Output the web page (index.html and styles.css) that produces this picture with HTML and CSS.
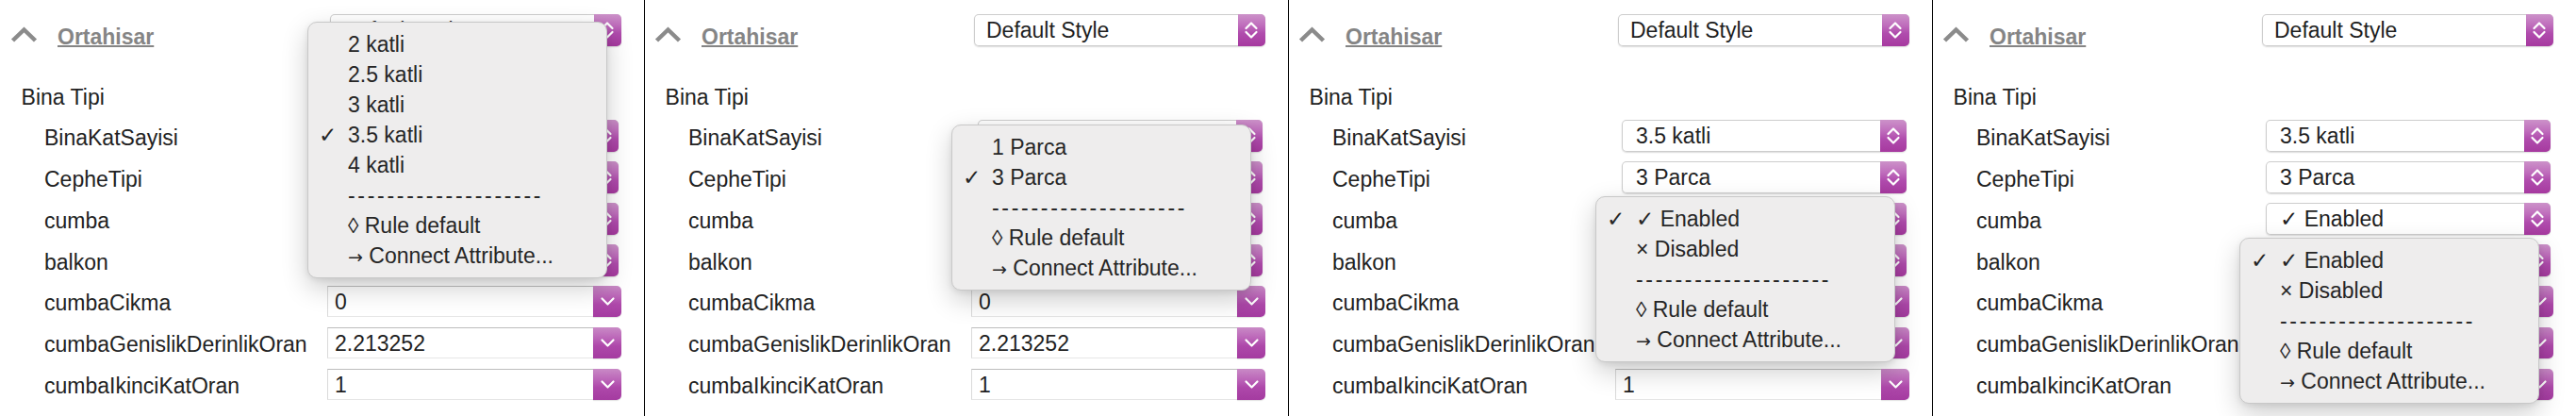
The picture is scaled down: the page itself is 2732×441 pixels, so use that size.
FILE: index.html
```html
<!DOCTYPE html>
<html lang="tr">
<head>
<meta charset="utf-8">
<title>Ortahisar attributes</title>
<link rel="stylesheet" href="styles.css">
</head>
<body>
<div class="strip">

  <!-- PANEL 1 -->
  <section class="panel">
    <header class="head">
      <svg class="caret" viewBox="0 0 29 17"><polyline points="2.5,15 14.5,3.5 26.5,15"/></svg>
      <span class="title">Ortahisar</span>
      <div class="popup popup-head"><span class="val">Default Style</span><span class="step"><svg viewBox="0 0 28 34"><polyline points="8.5,15 14,9.5 19.5,15"/><polyline points="8.5,19 14,24.5 19.5,19"/></svg></span></div>
    </header>
    <div class="group">Bina Tipi</div>
    <div class="row"><span class="lbl">BinaKatSayisi</span><div class="popup"><span class="val"></span><span class="step"><svg viewBox="0 0 28 34"><polyline points="8.5,15 14,9.5 19.5,15"/><polyline points="8.5,19 14,24.5 19.5,19"/></svg></span></div></div>
    <div class="row"><span class="lbl">CepheTipi</span><div class="popup"><span class="val"></span><span class="step"><svg viewBox="0 0 28 34"><polyline points="8.5,15 14,9.5 19.5,15"/><polyline points="8.5,19 14,24.5 19.5,19"/></svg></span></div></div>
    <div class="row"><span class="lbl">cumba</span><div class="popup"><span class="val"></span><span class="step"><svg viewBox="0 0 28 34"><polyline points="8.5,15 14,9.5 19.5,15"/><polyline points="8.5,19 14,24.5 19.5,19"/></svg></span></div></div>
    <div class="row"><span class="lbl">balkon</span><div class="popup"><span class="val"></span><span class="step"><svg viewBox="0 0 28 34"><polyline points="8.5,15 14,9.5 19.5,15"/><polyline points="8.5,19 14,24.5 19.5,19"/></svg></span></div></div>
    <div class="row"><span class="lbl">cumbaCikma</span><div class="field"><span class="fval">0</span><span class="fbtn"><svg viewBox="0 0 30 33"><polyline points="9.5,13.5 15.5,19.5 21.5,13.5"/></svg></span></div></div>
    <div class="row"><span class="lbl">cumbaGenislikDerinlikOran</span><div class="field"><span class="fval">2.213252</span><span class="fbtn"><svg viewBox="0 0 30 33"><polyline points="9.5,13.5 15.5,19.5 21.5,13.5"/></svg></span></div></div>
    <div class="row"><span class="lbl">cumbaIkinciKatOran</span><div class="field"><span class="fval">1</span><span class="fbtn"><svg viewBox="0 0 30 33"><polyline points="9.5,13.5 15.5,19.5 21.5,13.5"/></svg></span></div></div>

    <div class="menu menu-1">
      <div class="item"><span class="chk"></span><span>2 katli</span></div>
      <div class="item"><span class="chk"></span><span>2.5 katli</span></div>
      <div class="item"><span class="chk"></span><span>3 katli</span></div>
      <div class="item"><span class="chk">✓</span><span>3.5 katli</span></div>
      <div class="item"><span class="chk"></span><span>4 katli</span></div>
      <div class="item"><span class="chk"></span><span class="sep">--------------------</span></div>
      <div class="item"><span class="chk"></span><span>◊ Rule default</span></div>
      <div class="item"><span class="chk"></span><span><span class="arr">→</span> Connect Attribute...</span></div>
    </div>
  </section>

  <!-- PANEL 2 -->
  <section class="panel">
    <header class="head">
      <svg class="caret" viewBox="0 0 29 17"><polyline points="2.5,15 14.5,3.5 26.5,15"/></svg>
      <span class="title">Ortahisar</span>
      <div class="popup popup-head"><span class="val">Default Style</span><span class="step"><svg viewBox="0 0 28 34"><polyline points="8.5,15 14,9.5 19.5,15"/><polyline points="8.5,19 14,24.5 19.5,19"/></svg></span></div>
    </header>
    <div class="group">Bina Tipi</div>
    <div class="row"><span class="lbl">BinaKatSayisi</span><div class="popup"><span class="val"></span><span class="step"><svg viewBox="0 0 28 34"><polyline points="8.5,15 14,9.5 19.5,15"/><polyline points="8.5,19 14,24.5 19.5,19"/></svg></span></div></div>
    <div class="row"><span class="lbl">CepheTipi</span><div class="popup"><span class="val"></span><span class="step"><svg viewBox="0 0 28 34"><polyline points="8.5,15 14,9.5 19.5,15"/><polyline points="8.5,19 14,24.5 19.5,19"/></svg></span></div></div>
    <div class="row"><span class="lbl">cumba</span><div class="popup"><span class="val"></span><span class="step"><svg viewBox="0 0 28 34"><polyline points="8.5,15 14,9.5 19.5,15"/><polyline points="8.5,19 14,24.5 19.5,19"/></svg></span></div></div>
    <div class="row"><span class="lbl">balkon</span><div class="popup"><span class="val"></span><span class="step"><svg viewBox="0 0 28 34"><polyline points="8.5,15 14,9.5 19.5,15"/><polyline points="8.5,19 14,24.5 19.5,19"/></svg></span></div></div>
    <div class="row"><span class="lbl">cumbaCikma</span><div class="field"><span class="fval">0</span><span class="fbtn"><svg viewBox="0 0 30 33"><polyline points="9.5,13.5 15.5,19.5 21.5,13.5"/></svg></span></div></div>
    <div class="row"><span class="lbl">cumbaGenislikDerinlikOran</span><div class="field"><span class="fval">2.213252</span><span class="fbtn"><svg viewBox="0 0 30 33"><polyline points="9.5,13.5 15.5,19.5 21.5,13.5"/></svg></span></div></div>
    <div class="row"><span class="lbl">cumbaIkinciKatOran</span><div class="field"><span class="fval">1</span><span class="fbtn"><svg viewBox="0 0 30 33"><polyline points="9.5,13.5 15.5,19.5 21.5,13.5"/></svg></span></div></div>

    <div class="menu menu-2">
      <div class="item"><span class="chk"></span><span>1 Parca</span></div>
      <div class="item"><span class="chk">✓</span><span>3 Parca</span></div>
      <div class="item"><span class="chk"></span><span class="sep">--------------------</span></div>
      <div class="item"><span class="chk"></span><span>◊ Rule default</span></div>
      <div class="item"><span class="chk"></span><span><span class="arr">→</span> Connect Attribute...</span></div>
    </div>
  </section>

  <!-- PANEL 3 -->
  <section class="panel">
    <header class="head">
      <svg class="caret" viewBox="0 0 29 17"><polyline points="2.5,15 14.5,3.5 26.5,15"/></svg>
      <span class="title">Ortahisar</span>
      <div class="popup popup-head"><span class="val">Default Style</span><span class="step"><svg viewBox="0 0 28 34"><polyline points="8.5,15 14,9.5 19.5,15"/><polyline points="8.5,19 14,24.5 19.5,19"/></svg></span></div>
    </header>
    <div class="group">Bina Tipi</div>
    <div class="row"><span class="lbl">BinaKatSayisi</span><div class="popup"><span class="val">3.5 katli</span><span class="step"><svg viewBox="0 0 28 34"><polyline points="8.5,15 14,9.5 19.5,15"/><polyline points="8.5,19 14,24.5 19.5,19"/></svg></span></div></div>
    <div class="row"><span class="lbl">CepheTipi</span><div class="popup"><span class="val">3 Parca</span><span class="step"><svg viewBox="0 0 28 34"><polyline points="8.5,15 14,9.5 19.5,15"/><polyline points="8.5,19 14,24.5 19.5,19"/></svg></span></div></div>
    <div class="row"><span class="lbl">cumba</span><div class="popup"><span class="val"></span><span class="step"><svg viewBox="0 0 28 34"><polyline points="8.5,15 14,9.5 19.5,15"/><polyline points="8.5,19 14,24.5 19.5,19"/></svg></span></div></div>
    <div class="row"><span class="lbl">balkon</span><div class="popup"><span class="val"></span><span class="step"><svg viewBox="0 0 28 34"><polyline points="8.5,15 14,9.5 19.5,15"/><polyline points="8.5,19 14,24.5 19.5,19"/></svg></span></div></div>
    <div class="row"><span class="lbl">cumbaCikma</span><div class="field"><span class="fval"></span><span class="fbtn"><svg viewBox="0 0 30 33"><polyline points="9.5,13.5 15.5,19.5 21.5,13.5"/></svg></span></div></div>
    <div class="row"><span class="lbl">cumbaGenislikDerinlikOran</span><div class="field"><span class="fval"></span><span class="fbtn"><svg viewBox="0 0 30 33"><polyline points="9.5,13.5 15.5,19.5 21.5,13.5"/></svg></span></div></div>
    <div class="row"><span class="lbl">cumbaIkinciKatOran</span><div class="field"><span class="fval">1</span><span class="fbtn"><svg viewBox="0 0 30 33"><polyline points="9.5,13.5 15.5,19.5 21.5,13.5"/></svg></span></div></div>

    <div class="menu menu-3">
      <div class="item"><span class="chk">✓</span><span>✓ Enabled</span></div>
      <div class="item"><span class="chk"></span><span>× Disabled</span></div>
      <div class="item"><span class="chk"></span><span class="sep">--------------------</span></div>
      <div class="item"><span class="chk"></span><span>◊ Rule default</span></div>
      <div class="item"><span class="chk"></span><span><span class="arr">→</span> Connect Attribute...</span></div>
    </div>
  </section>

  <!-- PANEL 4 -->
  <section class="panel">
    <header class="head">
      <svg class="caret" viewBox="0 0 29 17"><polyline points="2.5,15 14.5,3.5 26.5,15"/></svg>
      <span class="title">Ortahisar</span>
      <div class="popup popup-head"><span class="val">Default Style</span><span class="step"><svg viewBox="0 0 28 34"><polyline points="8.5,15 14,9.5 19.5,15"/><polyline points="8.5,19 14,24.5 19.5,19"/></svg></span></div>
    </header>
    <div class="group">Bina Tipi</div>
    <div class="row"><span class="lbl">BinaKatSayisi</span><div class="popup"><span class="val">3.5 katli</span><span class="step"><svg viewBox="0 0 28 34"><polyline points="8.5,15 14,9.5 19.5,15"/><polyline points="8.5,19 14,24.5 19.5,19"/></svg></span></div></div>
    <div class="row"><span class="lbl">CepheTipi</span><div class="popup"><span class="val">3 Parca</span><span class="step"><svg viewBox="0 0 28 34"><polyline points="8.5,15 14,9.5 19.5,15"/><polyline points="8.5,19 14,24.5 19.5,19"/></svg></span></div></div>
    <div class="row"><span class="lbl">cumba</span><div class="popup"><span class="val">✓ Enabled</span><span class="step"><svg viewBox="0 0 28 34"><polyline points="8.5,15 14,9.5 19.5,15"/><polyline points="8.5,19 14,24.5 19.5,19"/></svg></span></div></div>
    <div class="row"><span class="lbl">balkon</span><div class="popup"><span class="val"></span><span class="step"><svg viewBox="0 0 28 34"><polyline points="8.5,15 14,9.5 19.5,15"/><polyline points="8.5,19 14,24.5 19.5,19"/></svg></span></div></div>
    <div class="row"><span class="lbl">cumbaCikma</span><div class="field"><span class="fval"></span><span class="fbtn"><svg viewBox="0 0 30 33"><polyline points="9.5,13.5 15.5,19.5 21.5,13.5"/></svg></span></div></div>
    <div class="row"><span class="lbl">cumbaGenislikDerinlikOran</span><div class="field"><span class="fval"></span><span class="fbtn"><svg viewBox="0 0 30 33"><polyline points="9.5,13.5 15.5,19.5 21.5,13.5"/></svg></span></div></div>
    <div class="row"><span class="lbl">cumbaIkinciKatOran</span><div class="field"><span class="fval"></span><span class="fbtn"><svg viewBox="0 0 30 33"><polyline points="9.5,13.5 15.5,19.5 21.5,13.5"/></svg></span></div></div>

    <div class="menu menu-4">
      <div class="item"><span class="chk">✓</span><span>✓ Enabled</span></div>
      <div class="item"><span class="chk"></span><span>× Disabled</span></div>
      <div class="item"><span class="chk"></span><span class="sep">--------------------</span></div>
      <div class="item"><span class="chk"></span><span>◊ Rule default</span></div>
      <div class="item"><span class="chk"></span><span><span class="arr">→</span> Connect Attribute...</span></div>
    </div>
  </section>

</div>
</body>
</html>
```

FILE: styles.css
```css
html, body {
  margin: 0;
  padding: 0;
  background: #ffffff;
}

body {
  font-family: "Liberation Sans", Arial, "DejaVu Sans", sans-serif;
  font-size: 23px;
  color: #222222;
}

.strip {
  display: flex;
  width: 2732px;
  height: 441px;
  overflow: hidden;
}

.panel {
  position: relative;
  flex: 0 0 683px;
  width: 683px;
  height: 441px;
  box-sizing: border-box;
  padding: 15px 24px 0 11px;
  overflow: hidden;
  background: #ffffff;
}

.panel + .panel {
  box-shadow: inset 1px 0 0 #000000;
}

/* header */
.head {
  display: flex;
  align-items: flex-start;
  height: 34px;
}

.caret {
  flex: none;
  width: 29px;
  height: 17px;
  margin-top: 13px;
  filter: blur(0.6px);
}

.caret polyline {
  fill: none;
  stroke: #8b8b8b;
  stroke-width: 4.5;
  stroke-linejoin: miter;
  stroke-linecap: butt;
}

.title {
  margin-left: 21px;
  margin-top: 10.7px;
  line-height: 26px;
  font-weight: bold;
  color: #858585;
  text-decoration: underline;
  text-decoration-thickness: 2px;
  white-space: nowrap;
}

/* popup buttons */
.popup {
  display: flex;
  height: 34px;
  width: 302px;
  margin-left: auto;
  margin-right: 3px;
  border-radius: 5px;
  overflow: hidden;
  background: #ffffff;
  box-shadow: inset 0 0 0 1px #cdcdcd, 0 1px 1.5px rgba(0, 0, 0, 0.14);
  flex: none;
}

.popup-head {
  width: 309px;
  margin-right: 0;
}

.popup .val {
  flex: 1;
  padding-left: 15px;
  line-height: 34px;
  white-space: nowrap;
  color: #1f1f1f;
}

.popup-head .val {
  padding-left: 13px;
}

.step {
  flex: none;
  width: 28px;
  height: 34px;
  background: linear-gradient(to bottom, #cc92c9 0%, #bf6dbc 35%, #b04cad 60%, #a6399f 100%);
}

.popup-head .step {
  width: 29px;
}

.step svg {
  display: block;
  width: 28px;
  height: 34px;
}

.step polyline,
.fbtn polyline {
  fill: none;
  stroke: #ffffff;
  stroke-width: 2.2;
  stroke-linecap: round;
  stroke-linejoin: round;
}

/* group + rows */
.group {
  margin: 40.7px 0 6.3px 11.6px;
  line-height: 26px;
}

.row {
  display: flex;
  align-items: center;
  height: 43.9px;
  margin-left: 36px;
}

.lbl {
  padding-top: 4px;
  line-height: 26px;
  white-space: nowrap;
}

/* numeric fields */
.field {
  display: flex;
  flex: none;
  width: 312px;
  height: 33px;
  margin-left: auto;
}

.fval {
  flex: 1;
  box-sizing: border-box;
  background: #ffffff;
  border: 1px solid #dadada;
  border-top-color: #bdbdbd;
  border-bottom-color: #e6e6e6;
  border-right: none;
  padding: 2px 0 0 7px;
  line-height: 29px;
  color: #1f1f1f;
}

.fbtn {
  flex: none;
  width: 30.5px;
  height: 33px;
  border-radius: 0 5px 5px 0;
  background: linear-gradient(to bottom, #c98ac6 0%, #bb65b8 35%, #ae48aa 60%, #a43ba0 100%);
  box-shadow: 0 1px 1px rgba(0, 0, 0, 0.12);
}

.fbtn svg {
  display: block;
  width: 30px;
  height: 33px;
}

/* menus */
.menu {
  position: absolute;
  left: 326px;
  width: 318px;
  box-sizing: border-box;
  padding: 7px 0;
  background: #eeeded;
  border: 1px solid #c8c8c8;
  border-radius: 10px;
  box-shadow: 0 10px 28px rgba(0, 0, 0, 0.2), 0 2px 6px rgba(0, 0, 0, 0.08);
  color: #262626;
  z-index: 5;
}

.menu-1 { top: 23.3px; }
.menu-2 { top: 131.7px; }
.menu-3 { top: 208.3px; }
.menu-4 { top: 251.7px; }

.item {
  display: flex;
  height: 32px;
  line-height: 32px;
  white-space: nowrap;
}

.chk {
  flex: none;
  width: 31px;
  padding-left: 11px;
  font-size: 23px;
}

.arr {
  font-family: "DejaVu Sans", sans-serif;
  font-size: 19px;
}

.sep {
  letter-spacing: 2.7px;
}
```
